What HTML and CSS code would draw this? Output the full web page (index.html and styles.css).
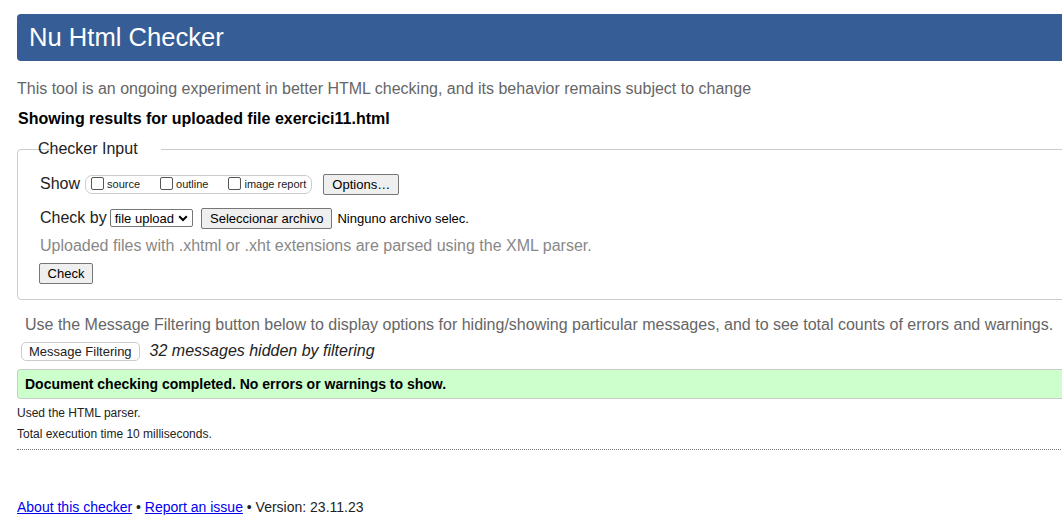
FILE: index.html
```html
<!DOCTYPE html>
<html lang="en">
<head>
<meta charset="utf-8">
<title>Nu Html Checker</title>
<link rel="stylesheet" href="styles.css">
</head>
<body>
<div class="page">
  <h1 class="title">Nu Html Checker</h1>
  <p class="intro">This tool is an ongoing experiment in better HTML checking, and its behavior remains subject to change</p>
  <p class="showing">Showing results for uploaded file exercici11.html</p>
  <fieldset class="input">
    <legend>Checker Input</legend>
    <div class="row row-show">
      <span class="label">Show</span>
      <span class="opts">
        <label class="opt"><span class="cb"></span>source</label>
        <label class="opt"><span class="cb"></span>outline</label>
        <label class="opt"><span class="cb"></span>image report</label>
      </span>
      <button class="btn btn-options">Options…</button>
    </div>
    <div class="row row-check">
      <span class="label">Check by</span>
      <span class="select">file upload<svg width="10" height="7" viewBox="0 0 10 7"><path d="M1.2 1.2 L5 5 L8.8 1.2" fill="none" stroke="#000" stroke-width="2"/></svg></span>
      <button class="btn btn-file">Seleccionar archivo</button>
      <span class="nofile">Ninguno archivo selec.</span>
    </div>
    <p class="hint">Uploaded files with .xhtml or .xht extensions are parsed using the XML parser.</p>
    <button class="btn btn-check">Check</button>
  </fieldset>
  <p class="filter-info">Use the Message Filtering button below to display options for hiding/showing particular messages, and to see total counts of errors and warnings.</p>
  <div class="filter-row">
    <button class="btn-filter">Message Filtering</button>
    <em class="hidden-count">32 messages hidden by filtering</em>
  </div>
  <div class="success">Document checking completed. No errors or warnings to show.</div>
  <p class="small">Used the HTML parser.</p>
  <p class="small small-2">Total execution time 10 milliseconds.</p>
  <hr class="dotted">
  <p class="footer"><a href="#">About this checker</a> • <a href="#">Report an issue</a> • Version: 23.11.23</p>
</div>
</body>
</html>
```

FILE: styles.css
```css
html { overflow: hidden; }
body {
  margin: 0;
  font-family: "Liberation Sans", Arial, sans-serif;
  color: #000;
  background: #fff;
}
.page {
  width: 1100px;
  padding-left: 17px;
  padding-top: 14px;
}
.title {
  margin: 0;
  height: 47px;
  line-height: 47px;
  background: #365d95;
  color: #fff;
  font-weight: normal;
  font-size: 25.6px;
  padding-left: 12px;
  border-radius: 4px;
}
.intro {
  margin: 18px 0 0 0;
  color: #666;
  font-size: 16px;
  line-height: 20px;
}
.showing {
  margin: 10px 0 0 1px;
  font-weight: bold;
  font-size: 16px;
  line-height: 20px;
}
.input {
  margin: 11px 0 0 0;
  border: 1px solid #ccc;
  border-radius: 4px;
  padding: 15px 22px 15px 22px;
  min-width: 0;
}
.input legend {
  font-size: 16px;
  padding: 0 1px;
  margin-left: 19px;
  position: relative;
  left: -22px;
  color: #222;
}
.row {
  display: flex;
  align-items: center;
}
.label {
  font-size: 16px;
  color: #222;
}
.row-show { height: 22px; }
.opts {
  display: inline-flex;
  align-items: center;
  height: 17px;
  border: 1px solid #ccc;
  border-radius: 7px;
  margin-left: 5px;
  padding: 0 5px 0 5px;
  gap: 20px;
}
.opt {
  display: inline-flex;
  align-items: center;
  font-size: 11px;
  color: #222;
}
.cb {
  width: 13px;
  height: 13px;
  border: 1px solid #555;
  border-radius: 2px;
  margin-right: 3px;
  box-sizing: border-box;
  position: relative;
  top: -1px;
}
.btn {
  font-family: "Liberation Sans", Arial, sans-serif;
  font-size: 13px;
  background: #efefef;
  border: 1px solid #767676;
  border-radius: 2px;
  color: #000;
  padding: 0 7px;
  height: 21px;
}
.btn-options { margin-left: 11px; width: 76px; }
.row-check { margin-top: 12px; height: 22px; }
.select {
  display: inline-flex;
  align-items: center;
  gap: 4px;
  margin-left: 3px;
  height: 18px;
  border: 1px solid #767676;
  border-radius: 2px;
  font-size: 13px;
  padding: 0 4px;
  box-sizing: border-box;
}
.btn-file { margin-left: 8px; height: 21px; padding: 0 8px; }
.nofile { font-size: 13px; margin-left: 5px; }
.hint {
  margin: 7px 0 0 0;
  color: #888;
  font-size: 16px;
  line-height: 20px;
}
.btn-check {
  margin-top: 7px;
  margin-left: -1px;
  width: 54px;
  height: 21px;
  display: block;
}
.filter-info {
  margin: 15px 0 0 8px;
  color: #666;
  font-size: 16px;
  line-height: 20px;
}
.filter-row {
  display: flex;
  align-items: center;
  margin-top: 6px;
  margin-left: 4px;
  height: 20px;
}
.btn-filter {
  font-family: "Liberation Sans", Arial, sans-serif;
  font-size: 13px;
  background: #fff;
  border: 1px solid #ccc;
  border-radius: 5px;
  height: 19px;
  padding: 0 7px;
  color: #222;
}
.hidden-count {
  margin-left: 10px;
  font-size: 16px;
  color: #222;
}
.success {
  margin-top: 8px;
  height: 30px;
  box-sizing: border-box;
  background: #ccffcc;
  border: 1px solid #ccc;
  border-radius: 3px;
  font-weight: bold;
  font-size: 14px;
  line-height: 28px;
  padding-left: 7px;
}
.small {
  margin: 6px 0 0 0;
  font-size: 12px;
  line-height: 16px;
  color: #222;
}
.small-2 { margin-top: 5px; }
.dotted {
  margin: 7px 0 0 0;
  border: 0;
  border-top: 1px dotted #777;
  height: 0;
}
.footer {
  margin: 48px 0 0 0;
  font-size: 14px;
  line-height: 18px;
  color: #222;
}
.footer a { color: #0000ee; }
```
